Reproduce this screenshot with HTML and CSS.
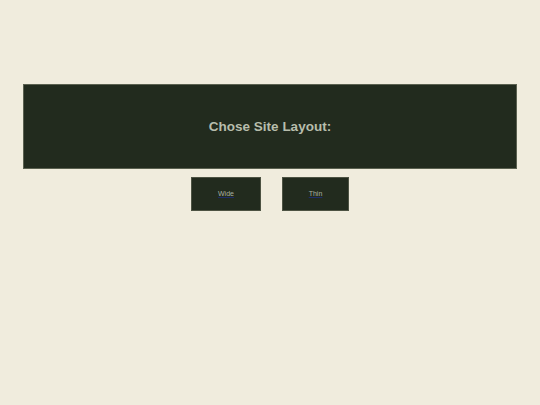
FILE: index.html
```html
<!DOCTYPE html>
<html>
<head>
<meta charset="utf-8">
<link rel="stylesheet" href="styles.css">
</head>
<body>
<div class="page">
  <div class="banner">
    <h1 class="title">Chose Site Layout:</h1>
  </div>
  <div class="choices">
    <a class="choice choice-wide" href="#">Wide</a>
    <a class="choice choice-thin" href="#">Thin</a>
  </div>
</div>
</body>
</html>
```
FILE: styles.css
```css
html, body {
  margin: 0;
  padding: 0;
  background: #f0ecdd;
  font-family: "Liberation Sans", Arial, sans-serif;
}
.page {
  padding: 84px 23px 0 23px;
}
.banner {
  height: 83px;
  background: #222b1e;
  border: 1px solid #5b6150;
  display: flex;
  align-items: center;
  justify-content: center;
}
.title {
  margin: 0;
  font-size: 13.5px;
  font-weight: bold;
  color: #b7bdac;
}
.choices {
  display: flex;
  justify-content: center;
  gap: 21px;
  margin-top: 8px;
}
.choice {
  display: flex;
  align-items: center;
  justify-content: center;
  box-sizing: border-box;
  height: 34px;
  padding-bottom: 2px;
  background: #222b1e;
  border: 1px solid #4d5343;
  color: #a9b0a1;
  font-size: 7px;
  text-decoration: underline;
  text-decoration-color: #1f2d6b;
}
.choice-wide { width: 70px; }
.choice-thin { width: 67px; }
```
